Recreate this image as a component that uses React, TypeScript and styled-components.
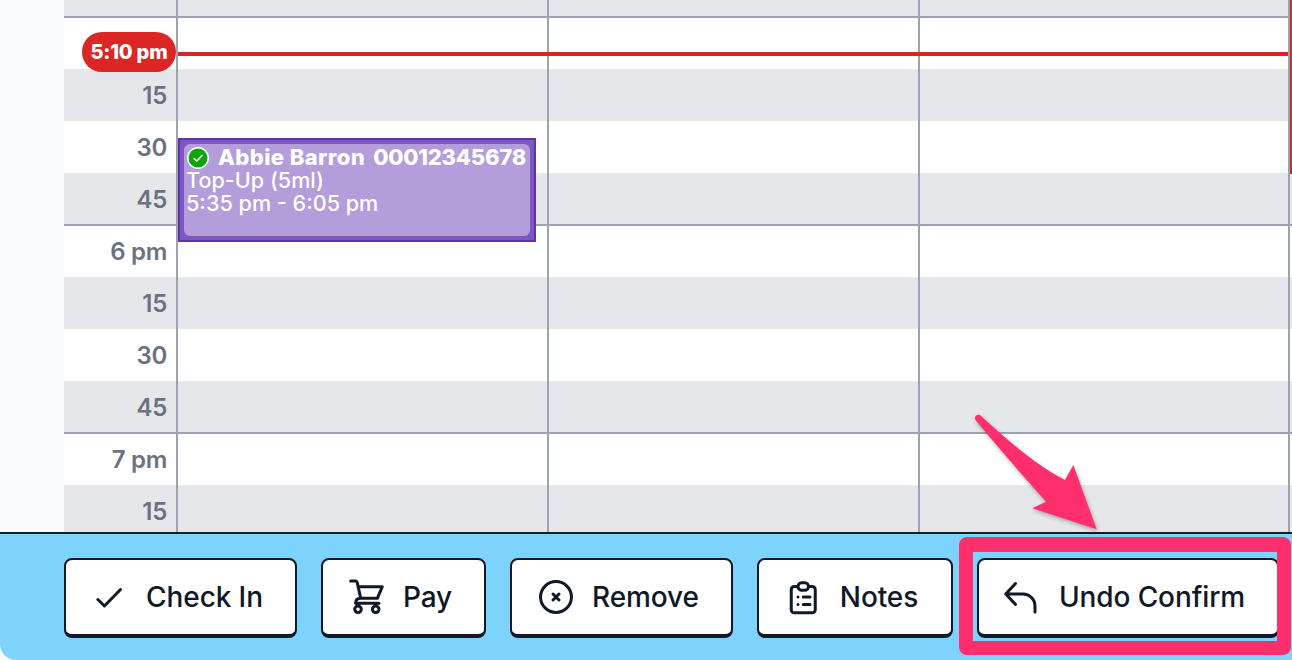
import React from 'react';
import styled, { createGlobalStyle } from 'styled-components';

const GlobalStyle = createGlobalStyle`
  html, body {
    margin: 0;
    padding: 0;
    background: #9ca3af;
    font-family: Inter, "Liberation Sans", sans-serif;
  }
`

const Page = styled.div`
  position: relative;
  width: 1292px;
  height: 660px;
  overflow: hidden;
  background: #f9fafb;
`

const Schedule = styled.div`
  height: 532px;
  padding-left: 64px;
  overflow: hidden;
`

const Rows = styled.div`
  margin-top: -35px;
  width: 1228px;
`

const Row = styled.div<{ $shaded: boolean; $hour: boolean }>`
  display: grid;
  grid-template-columns: 114px 371px 371px 370px;
  box-sizing: border-box;
  height: ${p => (p.$hour ? '53px' : '52px')};
  margin-top: ${p => (p.$hour ? '-1px' : '0')};
  background: ${p => (p.$shaded ? '#e5e7eb' : '#ffffff')};
  border-top: ${p => (p.$hour ? '2px solid #9ca3af' : '0 none')};
`

const TimeCell = styled.div`
  display: flex;
  align-items: center;
  justify-content: flex-end;
  box-sizing: border-box;
  padding-right: 9px;
  border-right: 2px solid #9ca3af;
  font-size: 24px;
  font-weight: 600;
  letter-spacing: -0.3px;
  color: #6b7280;
`

const DayCell = styled.div`
  box-sizing: border-box;
  border-right: 2px solid #9ca3af;
`

const NowPill = styled.div`
  position: absolute;
  left: 82px;
  top: 32px;
  width: 94px;
  height: 40px;
  display: flex;
  align-items: center;
  justify-content: center;
  border-radius: 20px;
  background: #dc2626;
  color: #ffffff;
  font-size: 20px;
  font-weight: 800;
  letter-spacing: -0.2px;
`

const NowLine = styled.div`
  position: absolute;
  left: 178px;
  top: 52px;
  width: 1110px;
  height: 4px;
  background: #dc2626;
`

const NowEdge = styled.div`
  position: absolute;
  left: 1290px;
  top: 0;
  width: 2px;
  height: 174px;
  background: #dc2626;
`

const Appointment = styled.div`
  position: absolute;
  left: 178px;
  top: 138px;
  width: 358px;
  height: 104px;
  box-sizing: border-box;
  padding: 4px;
  border: 2px solid #5e35a8;
  background: #7e57c2;
`

const AppointmentBody = styled.div`
  height: 100%;
  box-sizing: border-box;
  padding: 2px 3px 2px 2px;
  border-radius: 6px;
  background: #b39ddb;
  color: #ffffff;
  font-size: 21.6px;
  font-weight: 500;
  line-height: 23px;
  overflow: hidden;
`

const AppointmentTitle = styled.div`
  display: flex;
  align-items: center;
  gap: 9px;
  font-size: 22px;
  font-weight: 800;
  white-space: nowrap;
  overflow: hidden;
`

const PatientName = styled.span`
  letter-spacing: 0.4px;
`

const PatientId = styled.span`
  margin-left: -1px;
  letter-spacing: -0.2px;
`

const ConfirmedBadge = styled.svg`
  flex: none;
  width: 22px;
  height: 22px;
  margin-left: 1px;
`

const Footer = styled.div`
  display: flex;
  gap: 24px;
  height: 128px;
  box-sizing: border-box;
  padding: 24px 0 0 64px;
  border-top: 2px solid #111827;
  border-bottom-left-radius: 16px;
  background: #7dd3fc;
`

const ActionButton = styled.button<{ $width: number }>`
  flex: none;
  display: flex;
  align-items: center;
  justify-content: center;
  gap: 21px;
  width: ${p => p.$width}px;
  height: 80px;
  box-sizing: border-box;
  padding: 0 9px 0 0;
  border: 2px solid #111827;
  border-bottom-width: 4px;
  border-radius: 8px;
  background: #ffffff;
  color: #111827;
  font-family: inherit;
  font-size: 28px;
  font-weight: 500;
  letter-spacing: -0.1px;
`

const ActionIcon = styled.svg`
  flex: none;
  width: 36px;
  height: 36px;
  overflow: visible;
  fill: none;
  stroke: #111827;
  stroke-width: 2;
  stroke-linecap: round;
  stroke-linejoin: round;
`

const Highlight = styled.div`
  position: absolute;
  left: 959px;
  top: 537px;
  width: 332px;
  height: 118px;
  box-sizing: border-box;
  border: solid #ff2e6c;
  border-width: 15px 14px 14px 14px;
  border-radius: 8px;
`

const Arrow = styled.svg`
  position: absolute;
  left: 960px;
  top: 400px;
  width: 150px;
  height: 140px;
  filter: drop-shadow(1px 2px 2px rgba(0, 0, 0, 0.3));
`

const rows = [
  { label: '45', hour: false },
  { label: '', hour: true },
  { label: '15', hour: false },
  { label: '30', hour: false },
  { label: '45', hour: false },
  { label: '6 pm', hour: true },
  { label: '15', hour: false },
  { label: '30', hour: false },
  { label: '45', hour: false },
  { label: '7 pm', hour: true },
  { label: '15', hour: false },
]

const actions = [
  {
    label: 'Check In',
    width: 233,
    icon: <path d="M5.900 13.700 10.300 18 21 7" />,
  },
  {
    label: 'Pay',
    width: 165,
    icon: (
      <path d="M3.100 1.300H6a1.500 1.500 0 0 1 1.500 1.200L9.800 12.900M8 5.100H24.200L20.900 12.900H9.800C7.500 12.900 6.400 14 6.400 16.200H22M10.200 20.200a2.200 2.200 0 1 1-4.400 0a2.200 2.200 0 1 1 4.400 0ZM22 20.200a2.200 2.200 0 1 1-4.400 0a2.200 2.200 0 1 1 4.400 0Z" />
    ),
  },
  {
    label: 'Remove',
    width: 223,
    icon: (
      <>
        <circle cx="14" cy="12" r="10.300" />
        <path d="m12 10 4 4m0-4-4 4" />
      </>
    ),
  },
  {
    label: 'Notes',
    width: 196,
    icon: (
      <path d="M10 5H7.500a2 2 0 0 0-2 2v13.500a2 2 0 0 0 2 2h12a2 2 0 0 0 2-2V7a2 2 0 0 0-2-2H17M10 5a2.500 2.500 0 0 1 2.500-2.500h2A2.500 2.500 0 0 1 17 5a2.500 2.500 0 0 1-2.500 2.500h-2A2.500 2.500 0 0 1 10 5ZM10 12h.01M10 17h.01M13.500 12H18M13.500 17H18" />
    ),
  },
  {
    label: 'Undo Confirm',
    width: 302,
    icon: <path d="M9 17 2.500 10 9 3M2.500 10H14a8 8 0 0 1 8 8v4" />,
  },
]

export default function App() {
  return (
    <Page>
      <GlobalStyle />
      <Schedule>
        <Rows>
          {rows.map((row, i) => (
            <Row key={i} $shaded={i % 2 === 0} $hour={row.hour}>
              <TimeCell>{row.label}</TimeCell>
              <DayCell />
              <DayCell />
              <DayCell />
            </Row>
          ))}
        </Rows>
      </Schedule>
      <Footer>
        {actions.map(action => (
          <ActionButton key={action.label} $width={action.width}>
            <ActionIcon viewBox="0 0 24 24">{action.icon}</ActionIcon>
            {action.label}
          </ActionButton>
        ))}
      </Footer>
      <NowLine />
      <NowEdge />
      <NowPill>5:10 pm</NowPill>
      <Appointment>
        <AppointmentBody>
          <AppointmentTitle>
            <ConfirmedBadge viewBox="0 0 22 22">
              <circle cx="11" cy="11" r="11" fill="#ffffff" />
              <circle cx="11" cy="11" r="9.500" fill="#0aa60a" />
              <path d="m7 11.500 2.800 2.500L15 8.500" fill="none" stroke="#ffffff" strokeWidth="1.600" strokeLinecap="round" strokeLinejoin="round" />
            </ConfirmedBadge>
            <PatientName>Abbie Barron</PatientName>
            <PatientId>00012345678</PatientId>
          </AppointmentTitle>
          <div>Top-Up (5ml)</div>
          <div>5:35 pm - 6:05 pm</div>
        </AppointmentBody>
      </Appointment>
      <Highlight />
      <Arrow viewBox="0 0 150 140">
        <path
          d="M20.500 15.500C45 38 75 65 105 80L113.300 65L136.700 129.300L72.300 108.300L86 101.700C65 78 40 50 15.500 20C13.500 16.500 17.500 13 20.500 15.500Z"
          fill="#ff2e6c"
        />
      </Arrow>
    </Page>
  )
}
